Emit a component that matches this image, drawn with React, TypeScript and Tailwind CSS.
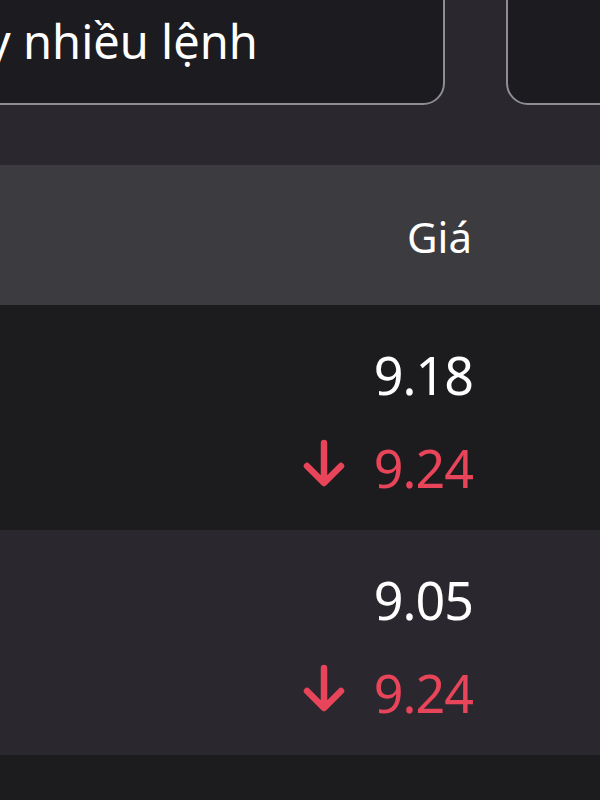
import React from "react";

type Row = { price: string; ref: string; bg: string };

const rows: Row[] = [
  { price: "9.18", ref: "9.24", bg: "bg-[#1c1b1e]" },
  { price: "9.05", ref: "9.24", bg: "bg-[#2a282e]" },
];

function DownArrow() {
  return (
    <svg width="44" height="48" viewBox="0 0 44 48" fill="none" className="-mt-[10px]">
      <path
        d="M22 4v39M5 27l17 17 17-17"
        stroke="#e8445a"
        strokeWidth="6.5"
        strokeLinecap="round"
        strokeLinejoin="round"
      />
    </svg>
  );
}

export default function App() {
  return (
    <div
      className="w-[600px] h-[800px] overflow-hidden bg-[#1c1b1e] text-white"
      style={{ fontFamily: '"Noto Sans", "Open Sans", sans-serif' }}
    >
      {/* action buttons */}
      <div className="h-[165px] bg-[#2a282e] overflow-hidden">
        <div className="flex gap-[61px] -ml-[120px] -mt-[30px]">
          <button className="w-[565px] h-[135px] shrink-0 rounded-[22px] border-2 border-[#8e8d92] bg-[#1c1b1f] flex items-start pl-[41px] pt-[46px] text-[47px] leading-none text-white whitespace-nowrap">
            Hủy nhiều lệnh
          </button>
          <button className="w-[200px] h-[135px] shrink-0 rounded-[22px] border-2 border-[#8e8d92] bg-[#1c1b1f]" />
        </div>
      </div>

      {/* table header */}
      <div className="h-[140px] bg-[#3c3b3f] flex items-center justify-end pr-[128px] pt-[3px]">
        <span className="text-[42px] leading-none">Giá</span>
      </div>

      {/* rows */}
      {rows.map((r, i) => (
        <div
          key={i}
          className={`h-[225px] ${r.bg} flex flex-col items-end pr-[127px] pt-[44px] gap-[41px]`}
        >
          <span className="text-[52px] leading-none tracking-[-1px]">{r.price}</span>
          <div className="flex items-center gap-[28px] text-[#e8445a]">
            <DownArrow />
            <span className="text-[52px] leading-none tracking-[-1px]">{r.ref}</span>
          </div>
        </div>
      ))}
      <div className="h-[45px] bg-[#1c1b1e]" />
    </div>
  );
}
